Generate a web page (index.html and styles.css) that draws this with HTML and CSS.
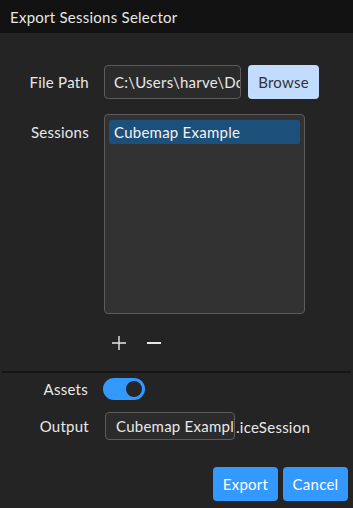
FILE: index.html
```html
<!DOCTYPE html>
<html lang="en">
<head>
  <meta charset="UTF-8">
  <title>Export Sessions Selector</title>
  <link rel="stylesheet" href="styles.css">
</head>
<body>
  <div class="titlebar">Export Sessions Selector</div>

  <div class="form">
    <div class="row">
      <div class="label">File Path</div>
      <div class="field path">C:\Users\harve\Documents\Sessions</div>
      <button class="btn btn-light">Browse</button>
    </div>

    <div class="row row-top">
      <div class="label label-list">Sessions</div>
      <div class="listbox">
        <div class="list-item selected">Cubemap Example</div>
      </div>
    </div>

    <div class="row tools">
      <div class="label"></div>
      <button class="icon-btn" title="Add">
        <svg width="14" height="14" viewBox="0 0 14 14"><path d="M7 0v14M0 7h14" stroke="#e6e6e6" stroke-width="1.4" fill="none"/></svg>
      </button>
      <button class="icon-btn" title="Remove">
        <svg width="14" height="14" viewBox="0 0 14 14"><path d="M0 7h14" stroke="#e6e6e6" stroke-width="2" fill="none"/></svg>
      </button>
    </div>
  </div>

  <div class="separator"></div>

  <div class="form form-lower">
    <div class="row">
      <div class="label label-assets">Assets</div>
      <div class="toggle on"><span class="knob"></span></div>
    </div>

    <div class="row row-output">
      <div class="label">Output</div>
      <div class="field output">Cubemap Example</div>
      <span class="suffix">.iceSession</span>
    </div>
  </div>

  <div class="actions">
    <button class="btn btn-blue">Export</button>
    <button class="btn btn-blue">Cancel</button>
  </div>
</body>
</html>
```

FILE: styles.css
```css
:root {
  --bg: #242424;
  --title-bg: #121212;
  --text: #e8e8e8;
  --field-bg: #2b2b2b;
  --list-bg: #323232;
  --border: #5c5c5c;
  --blue: #3399ff;
  --selected: #1d4f7b;
}
html, body {
  margin: 0;
  padding: 0;
  background: var(--bg);
  color: var(--text);
  font-family: 'Lato', 'Open Sans', Arial, sans-serif;
  font-size: 15px;
  letter-spacing: 0.25px;
  height: 100%;
  overflow: hidden;
}
button {
  font-family: inherit;
  font-size: inherit;
  letter-spacing: inherit;
  border: none;
  margin: 0;
  padding: 0;
  cursor: pointer;
}

.titlebar {
  height: 33px;
  line-height: 34px;
  background: var(--title-bg);
  padding-left: 10px;
  color: #e6e6e6;
}

.form {
  padding-top: 32px;
  display: flex;
  flex-direction: column;
  gap: 15px;
}
.form-lower {
  padding-top: 5px;
  gap: 12px;
}
.row {
  display: flex;
  align-items: center;
  gap: 15px;
}
.row-top {
  align-items: flex-start;
}
.label {
  width: 89px;
  flex: none;
  text-align: right;
}
.label-list {
  padding-top: 9px;
}
.label-assets {
  width: 88px;
  margin-right: 1px;
}

.field {
  box-sizing: border-box;
  height: 34px;
  line-height: 32px;
  background: var(--field-bg);
  border: 1px solid var(--border);
  border-radius: 4px;
  padding: 0 9px;
  white-space: nowrap;
  overflow: hidden;
}
.path {
  width: 137px;
  margin-right: -8px;
}

.btn {
  height: 34px;
  border-radius: 4px;
  padding: 0 8px;
}
.btn-light {
  background: #c2dcff;
  color: #333;
  width: 71px;
}
.btn-blue {
  background: var(--blue);
  color: #fff;
  width: 65px;
}

.listbox {
  box-sizing: border-box;
  width: 201px;
  height: 200px;
  background: var(--list-bg);
  border: 1px solid var(--border);
  border-radius: 4px;
  padding: 5px 4px;
}
.list-item {
  height: 24px;
  line-height: 24px;
  padding: 0 5px;
  border-radius: 2px;
}
.list-item.selected {
  background: var(--selected);
  color: #f2f2f2;
}

.tools {
  gap: 0;
  margin-top: 7px;
  padding-bottom: 21px;
}
.icon-btn {
  background: none;
  width: 14px;
  height: 14px;
  display: flex;
  margin-left: 23px;
}
.icon-btn + .icon-btn {
  margin-left: 21px;
}
.icon-btn svg {
  display: block;
}

.separator {
  height: 2px;
  background: #151515;
  margin: 0 2px;
}

.toggle {
  box-sizing: border-box;
  width: 42px;
  height: 22px;
  border-radius: 11px;
  background: var(--blue);
  display: flex;
  align-items: center;
  justify-content: flex-end;
  padding: 1px;
  margin-left: -1px;
}
.knob {
  box-sizing: border-box;
  width: 20px;
  height: 20px;
  border-radius: 50%;
  background: #262626;
  border: 2px solid var(--blue);
}

.row-output {
  gap: 0;
}
.output {
  width: 130px;
  height: 28px;
  line-height: 26px;
  padding: 0 10px;
  margin-left: 16px;
}
.suffix {
  margin-left: 1px;
  padding-top: 2px;
}

.actions {
  display: flex;
  justify-content: flex-end;
  gap: 5px;
  padding: 27px 5px 0 0;
}
```
